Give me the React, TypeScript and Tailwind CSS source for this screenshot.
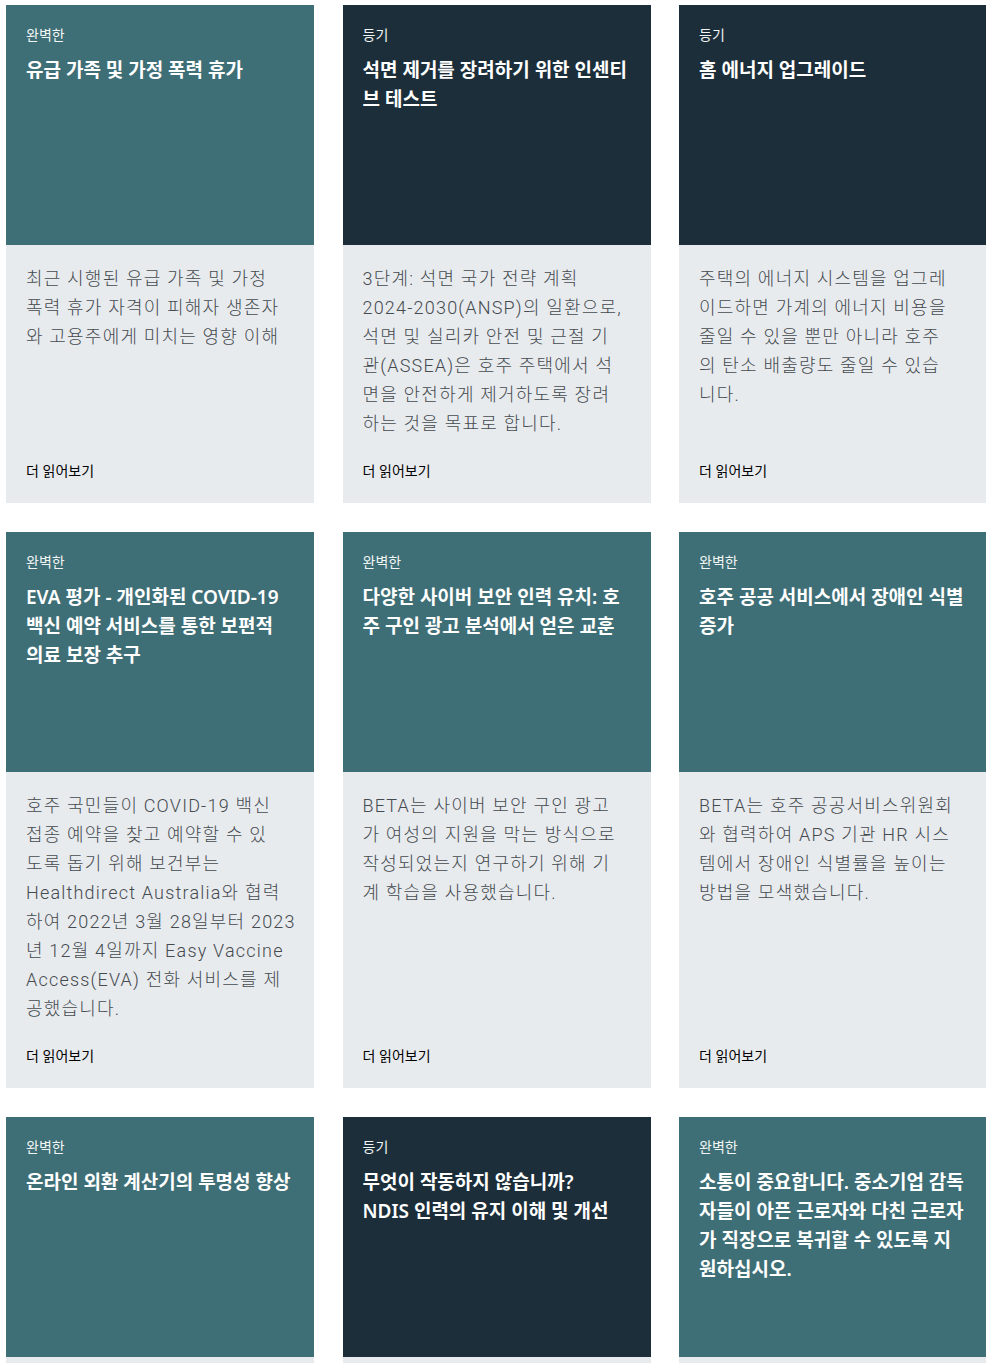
import React from "react";

type Card = {
  label: string;
  title: string[];
  body: string[];
  dark?: boolean;
};

const cards: Card[] = [
  {
    label: "완벽한",
    title: ["유급 가족 및 가정 폭력 휴가"],
    body: [
      "최근 시행된 유급 가족 및 가정",
      "폭력 휴가 자격이 피해자 생존자",
      "와 고용주에게 미치는 영향 이해",
    ],
  },
  {
    label: "등기",
    title: ["석면 제거를 장려하기 위한 인센티", "브 테스트"],
    body: [
      "3단계: 석면 국가 전략 계획",
      "2024-2030(ANSP)의 일환으로,",
      "석면 및 실리카 안전 및 근절 기",
      "관(ASSEA)은 호주 주택에서 석",
      "면을 안전하게 제거하도록 장려",
      "하는 것을 목표로 합니다.",
    ],
    dark: true,
  },
  {
    label: "등기",
    title: ["홈 에너지 업그레이드"],
    body: [
      "주택의 에너지 시스템을 업그레",
      "이드하면 가계의 에너지 비용을",
      "줄일 수 있을 뿐만 아니라 호주",
      "의 탄소 배출량도 줄일 수 있습",
      "니다.",
    ],
    dark: true,
  },
  {
    label: "완벽한",
    title: ["EVA 평가 - 개인화된 COVID-19", "백신 예약 서비스를 통한 보편적", "의료 보장 추구"],
    body: [
      "호주 국민들이 COVID-19 백신",
      "접종 예약을 찾고 예약할 수 있",
      "도록 돕기 위해 보건부는",
      "Healthdirect Australia와 협력",
      "하여 2022년 3월 28일부터 2023",
      "년 12월 4일까지 Easy Vaccine",
      "Access(EVA) 전화 서비스를 제",
      "공했습니다.",
    ],
  },
  {
    label: "완벽한",
    title: ["다양한 사이버 보안 인력 유치: 호", "주 구인 광고 분석에서 얻은 교훈"],
    body: [
      "BETA는 사이버 보안 구인 광고",
      "가 여성의 지원을 막는 방식으로",
      "작성되었는지 연구하기 위해 기",
      "계 학습을 사용했습니다.",
    ],
  },
  {
    label: "완벽한",
    title: ["호주 공공 서비스에서 장애인 식별", "증가"],
    body: [
      "BETA는 호주 공공서비스위원회",
      "와 협력하여 APS 기관 HR 시스",
      "템에서 장애인 식별률을 높이는",
      "방법을 모색했습니다.",
    ],
  },
  {
    label: "완벽한",
    title: ["온라인 외환 계산기의 투명성 향상"],
    body: [],
  },
  {
    label: "등기",
    title: ["무엇이 작동하지 않습니까?", "NDIS 인력의 유지 이해 및 개선"],
    body: [],
    dark: true,
  },
  {
    label: "완벽한",
    title: [
      "소통이 중요합니다. 중소기업 감독",
      "자들이 아픈 근로자와 다친 근로자",
      "가 직장으로 복귀할 수 있도록 지",
      "원하십시오.",
    ],
    body: [],
  },
];

function CardView({ c }: { c: Card }) {
  return (
    <div className="flex flex-col">
      <div
        className={
          (c.dark ? "bg-[#1b2e3a] " : "bg-[#3e6e76] ") +
          "h-[240px] px-5 pt-5 text-white"
        }
      >
        <div className="text-[14px] leading-[20px] font-['Noto_Sans','Noto_Sans_CJK_KR',sans-serif] text-[#f2f5f5]">
          {c.label}
        </div>
        <h2 className="mt-[11px] text-[19px] leading-[29px] font-semibold font-['Noto_Sans','Noto_Sans_CJK_KR',sans-serif] text-white">
          {c.title.map((t, i) => (
            <span key={i} className="block whitespace-nowrap">
              {t}
            </span>
          ))}
        </h2>
      </div>
      <div className="flex flex-1 flex-col bg-[#e8ebee] px-5 pt-[19px] pb-[22px] min-h-[220px]">
        <p className="text-[18px] leading-[29px] font-light tracking-[1.2px] text-[#454a4e] font-['Roboto','Noto_Sans_CJK_KR',sans-serif]">
          {c.body.map((t, i) => (
            <span key={i} className="block whitespace-nowrap">
              {t}
            </span>
          ))}
        </p>
        <a className="mt-auto pt-[23px] text-[14px] leading-[20px] text-black font-['Noto_Sans','Noto_Sans_CJK_KR',sans-serif]">
          더 읽어보기
        </a>
      </div>
    </div>
  );
}

export default function App() {
  return (
    <div className="min-h-screen bg-white pl-[6px] pr-[5px] pt-[5px]">
      <div className="grid grid-cols-[308px_308px_307px] gap-x-[28.5px] gap-y-[29px]">
        {cards.map((c, i) => (
          <CardView key={i} c={c} />
        ))}
      </div>
    </div>
  );
}
